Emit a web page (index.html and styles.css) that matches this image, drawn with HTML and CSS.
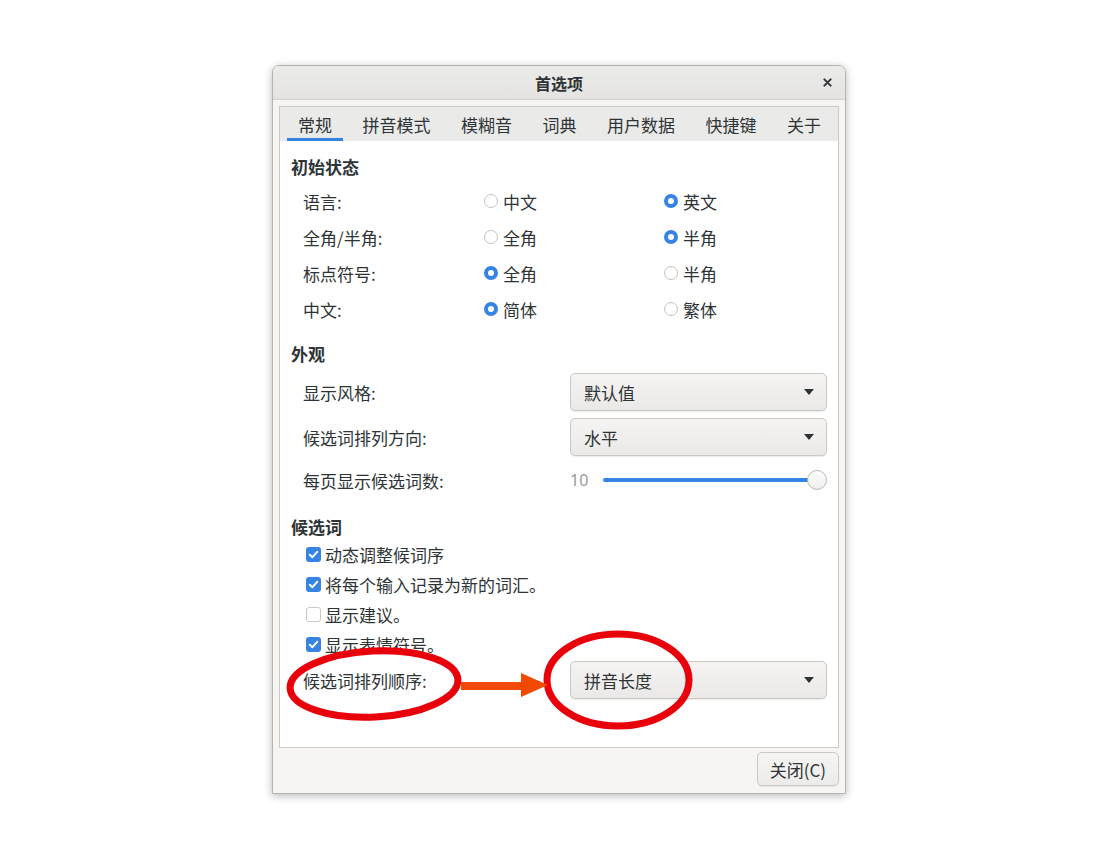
FILE: index.html
```html
<!doctype html>
<html>
  <head>
    <meta charset="utf-8" />
    <link rel="stylesheet" href="styles.css">
  </head>
  <body>
    <div class="stage">
      <div class="window">
        <div class="titlebar">
          <span></span>
          <span class="title">首选项</span>
          <span class="close">
            <svg viewBox="0 0 10 10" width="9" height="9">
              <path d="M1.5 1.5 L8.5 8.5 M8.5 1.5 L1.5 8.5" stroke="#2e3436" stroke-width="2.2" stroke-linecap="round" />
            </svg>
          </span>
        </div>

        <div class="window-body">
          <div class="notebook">
            <div class="tabs">
              <div class="tab active">常规</div>
              <div class="tab">拼音模式</div>
              <div class="tab">模糊音</div>
              <div class="tab">词典</div>
              <div class="tab">用户数据</div>
              <div class="tab">快捷键</div>
              <div class="tab">关于</div>
            </div>

            <div class="page">
              <!-- Initial state -->
              <div class="section-title first">初始状态</div>
              <div class="radio-row">
                <span class="row-label">语言:</span>
                <span class="radio"><span class="dot"></span>中文</span>
                <span class="radio"><span class="dot on"></span>英文</span>
              </div>
              <div class="radio-row">
                <span class="row-label">全角/半角:</span>
                <span class="radio"><span class="dot"></span>全角</span>
                <span class="radio"><span class="dot on"></span>半角</span>
              </div>
              <div class="radio-row">
                <span class="row-label">标点符号:</span>
                <span class="radio"><span class="dot on"></span>全角</span>
                <span class="radio"><span class="dot"></span>半角</span>
              </div>
              <div class="radio-row">
                <span class="row-label">中文:</span>
                <span class="radio"><span class="dot on"></span>简体</span>
                <span class="radio"><span class="dot"></span>繁体</span>
              </div>

              <!-- Appearance -->
              <div class="section-title appearance">外观</div>
              <div class="combo-row row-style">
                <span class="row-label">显示风格:</span>
                <div class="combo">
                  <span>默认值</span>
                  <svg class="combo-arrow" viewBox="0 0 10 6" width="10" height="6"><polygon points="0,0 10,0 5,6" fill="#2e3436" /></svg>
                </div>
              </div>
              <div class="combo-row row-direction">
                <span class="row-label">候选词排列方向:</span>
                <div class="combo">
                  <span>水平</span>
                  <svg class="combo-arrow" viewBox="0 0 10 6" width="10" height="6"><polygon points="0,0 10,0 5,6" fill="#2e3436" /></svg>
                </div>
              </div>
              <div class="combo-row row-slider">
                <span class="row-label">每页显示候选词数:</span>
                <div class="slider">
                  <span class="slider-value">10</span>
                  <span class="slider-track"></span>
                  <span class="slider-knob"></span>
                </div>
              </div>

              <!-- Candidates -->
              <div class="section-title candidates">候选词</div>
              <div class="check-row">
                <span class="check on"><svg viewBox="0 0 15 15" width="15" height="15"><path d="M3.8 7.7 L6.4 10.2 L11.2 4.8" fill="none" stroke="#fff" stroke-width="2" stroke-linecap="round" stroke-linejoin="round" /></svg></span>
                动态调整候词序
              </div>
              <div class="check-row">
                <span class="check on"><svg viewBox="0 0 15 15" width="15" height="15"><path d="M3.8 7.7 L6.4 10.2 L11.2 4.8" fill="none" stroke="#fff" stroke-width="2" stroke-linecap="round" stroke-linejoin="round" /></svg></span>
                将每个输入记录为新的词汇。
              </div>
              <div class="check-row">
                <span class="check"></span>
                显示建议。
              </div>
              <div class="check-row">
                <span class="check on"><svg viewBox="0 0 15 15" width="15" height="15"><path d="M3.8 7.7 L6.4 10.2 L11.2 4.8" fill="none" stroke="#fff" stroke-width="2" stroke-linecap="round" stroke-linejoin="round" /></svg></span>
                显示表情符号。
              </div>
              <div class="combo-row row-order">
                <span class="row-label">候选词排列顺序:</span>
                <div class="combo">
                  <span>拼音长度</span>
                  <svg class="combo-arrow" viewBox="0 0 10 6" width="10" height="6"><polygon points="0,0 10,0 5,6" fill="#2e3436" /></svg>
                </div>
              </div>
            </div>
          </div>

          <div class="actions">
            <button class="button">关闭(C)</button>
          </div>
        </div>
      </div>

      <!-- Hand-drawn annotation on top of the screenshot -->
      <svg class="annotations" viewBox="0 0 1111 858" width="1111" height="858">
        <ellipse cx="374" cy="684" rx="84" ry="33" transform="rotate(-3 374 684)" fill="none" stroke="#e8000b" stroke-width="7" />
        <ellipse cx="618" cy="680" rx="71" ry="46" fill="none" stroke="#e8000b" stroke-width="7" />
        <line x1="461" y1="686" x2="524" y2="686" stroke="#f24a05" stroke-width="8" />
        <polygon points="521,673 548,685 521,697" fill="#f24a05" />
      </svg>
    </div>
  </body>
</html>
```

FILE: styles.css
```css
* {
  box-sizing: border-box;
}

body {
  margin: 0;
  background: #fff;
  font-family: 'Noto Sans CJK SC', 'Noto Sans', sans-serif;
  font-size: 17px;
  color: #2e3436;
}

.stage {
  position: relative;
  width: 1111px;
  height: 858px;
  padding: 65px 0 0 272px;
}

/* Window */
.window {
  width: 574px;
  height: 729px;
  background: #f6f5f4;
  border: 1px solid #b9b3ad;
  border-radius: 7px 7px 0 0;
  box-shadow: 0 2px 9px rgba(0, 0, 0, 0.28);
  display: flex;
  flex-direction: column;
  overflow: hidden;
}

.titlebar {
  height: 34px;
  flex-shrink: 0;
  background: linear-gradient(#ebebea, #e4e3e2);
  border-bottom: 1px solid #d6d1cd;
  display: grid;
  grid-template-columns: 1fr auto 1fr;
  align-items: center;
  padding: 0 13px;
}

.title {
  font-weight: 700;
  font-size: 16px;
}

.close {
  justify-self: end;
  display: flex;
}

.window-body {
  flex: 1;
  padding: 6px 6px 7px;
  display: flex;
  flex-direction: column;
}

/* Notebook */
.notebook {
  height: 642px;
  border: 1px solid #cfc9c4;
  display: flex;
  flex-direction: column;
}

.tabs {
  height: 34px;
  flex-shrink: 0;
  background: #eaeae9;
  display: flex;
  gap: 8.5px;
  padding-left: 7px;
}

.tab {
  padding: 4px 11px 0;
  display: flex;
  align-items: center;
  border-bottom: 3px solid transparent;
  line-height: 1;
}

.tab.active {
  border-bottom-color: #3584e4;
}

.page {
  flex: 1;
  background: #fff;
}

.section-title {
  font-weight: 700;
  height: 26px;
  line-height: 26px;
  padding-left: 11px;
}

.section-title.first {
  margin-top: 13px;
  margin-bottom: 3px;
}

.section-title.appearance {
  margin-top: 14px;
}

.section-title.candidates {
  margin-top: 16px;
  height: 24px;
  line-height: 24px;
}

/* Radio rows */
.radio-row {
  display: grid;
  grid-template-columns: 181px 180px 1fr;
  height: 36px;
  align-items: center;
  padding-left: 23px;
}

.radio {
  display: flex;
  align-items: center;
  gap: 5px;
}

.dot {
  width: 14px;
  height: 14px;
  border-radius: 50%;
  border: 1px solid #c6c2be;
  background: #fff;
}

.dot.on {
  border: 4.5px solid #3584e4;
}

/* Combo rows */
.combo-row {
  display: grid;
  grid-template-columns: 267px 257px;
  height: 38px;
  align-items: center;
  padding-left: 23px;
}

.row-style {
  margin-top: 6px;
}

.row-direction {
  margin-top: 7px;
}

.row-slider {
  margin-top: 5px;
}

.row-order {
  margin-top: 2px;
}

.combo {
  height: 38px;
  display: flex;
  align-items: center;
  justify-content: space-between;
  padding: 0 12px 0 13px;
  background: linear-gradient(#f5f4f3, #ebe9e7);
  border: 1px solid #cdc7c2;
  border-radius: 5px;
  box-shadow: 0 1px 1px rgba(0, 0, 0, 0.08);
}

/* Slider */
.slider {
  display: flex;
  align-items: center;
}

.slider-value {
  font-family: 'Noto Sans', sans-serif;
  font-size: 16px;
  color: #979b9b;
  width: 33px;
}

.slider-track {
  flex: 1;
  height: 4px;
  border-radius: 2px;
  background: #3584e4;
  margin-right: 12px;
}

.slider-knob {
  width: 20px;
  height: 20px;
  margin-left: -20px;
  border-radius: 50%;
  border: 1px solid #bdb7b1;
  background: linear-gradient(#fdfdfd, #efeeed);
}

/* Checkboxes */
.check-row {
  height: 30px;
  display: flex;
  align-items: center;
  gap: 4px;
  padding-left: 26px;
}

.check {
  width: 15px;
  height: 15px;
  border-radius: 3px;
  border: 1px solid #cdc7c2;
  background: #fff;
  display: flex;
}

.check.on {
  border: none;
  background: #3584e4;
}

/* Actions */
.actions {
  display: flex;
  justify-content: flex-end;
  padding-top: 4px;
}

.button {
  height: 34px;
  padding: 0 12px;
  font-family: 'Noto Sans CJK SC', 'Noto Sans', sans-serif;
  font-size: 17px;
  color: #2e3436;
  background: linear-gradient(#f6f5f4, #edebe9);
  border: 1px solid #cdc7c2;
  border-radius: 5px;
  box-shadow: 0 1px 1px rgba(0, 0, 0, 0.06);
}

/* Annotation overlay */
.annotations {
  position: absolute;
  top: 0;
  left: 0;
  pointer-events: none;
}
```
